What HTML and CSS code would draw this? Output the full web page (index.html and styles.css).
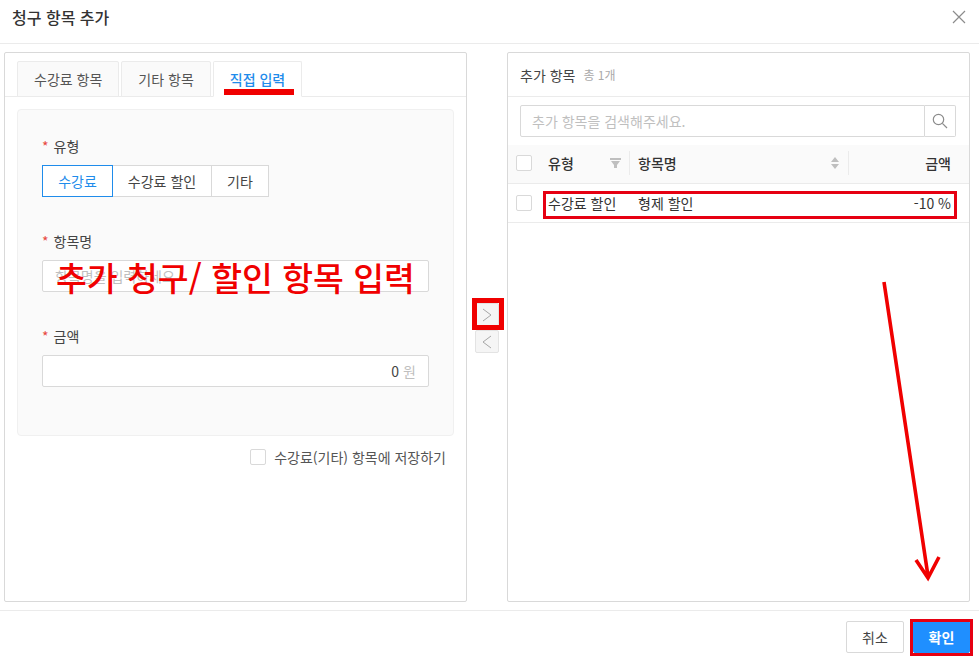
FILE: index.html
```html
<!DOCTYPE html>
<html lang="ko">
<head>
<meta charset="utf-8">
<title>청구 항목 추가</title>
<link rel="stylesheet" href="styles.css">
</head>
<body>
<div class="modal">
  <header class="modal-head">
    <h1 class="modal-title">청구 항목 추가</h1>
    <svg class="close" width="14" height="14" viewBox="0 0 14 14"><path d="M1 1L13 13M13 1L1 13" stroke="#8c8c8c" stroke-width="1.2" fill="none"/></svg>
  </header>
  <main class="modal-body">
    <section class="panel">
      <div class="tabs">
        <div class="tab">수강료 항목</div>
        <div class="tab">기타 항목</div>
        <div class="tab active">직접 입력</div>
      </div>
      <div class="form-box">
        <div class="field field-type">
          <div class="label"><span class="req">*</span>유형</div>
          <div class="radio-group">
            <div class="radio selected">수강료</div>
            <div class="radio r2">수강료 할인</div>
            <div class="radio r3">기타</div>
          </div>
        </div>
        <div class="field">
          <div class="label"><span class="req">*</span>항목명</div>
          <div class="input placeholder">항목명을 입력하세요</div>
        </div>
        <div class="field">
          <div class="label"><span class="req">*</span>금액</div>
          <div class="input amount"><span>0</span><span class="unit">원</span></div>
        </div>
      </div>
      <div class="save-row"><span class="check"></span>수강료(기타) 항목에 저장하기</div>
    </section>
    <div class="transfer">
      <div class="arrow-btn"><svg width="10" height="14" viewBox="0 0 10 14"><path d="M1 1L9 7L1 13" stroke="#a6a6a6" fill="none"/></svg></div>
      <div class="arrow-btn"><svg width="10" height="14" viewBox="0 0 10 14"><path d="M9 1L1 7L9 13" stroke="#a6a6a6" fill="none"/></svg></div>
    </div>
    <section class="panel">
      <div class="panel-head"><span class="panel-title">추가 항목</span><span class="count">총 1개</span></div>
      <div class="search">
        <div class="search-input">추가 항목을 검색해주세요.</div>
        <div class="search-btn"><svg width="16" height="16" viewBox="0 0 16 16"><circle cx="6.5" cy="6.5" r="5.2" stroke="#8c8c8c" stroke-width="1.2" fill="none"/><path d="M10.4 10.4L15 15" stroke="#8c8c8c" stroke-width="1.2"/></svg></div>
      </div>
      <div class="row thead">
        <div class="c-check"><span class="check"></span></div>
        <div class="c-type">유형<svg width="11" height="11" viewBox="0 0 11 11"><path d="M0 0H11V2H0Z M1 3H10L7 7V10H4V7Z" fill="#bfbfbf"/></svg></div>
        <div class="c-name">항목명<svg width="8" height="14" viewBox="0 0 8 14"><path d="M4 1L8 6H0Z M0 8H8L4 13Z" fill="#bfbfbf"/></svg></div>
        <div class="c-amt">금액</div>
      </div>
      <div class="row tbody">
        <div class="c-check"><span class="check"></span></div>
        <div class="c-type">수강료 할인</div>
        <div class="c-name">형제 할인</div>
        <div class="c-amt">-10 %</div>
      </div>
    </section>
  </main>
  <footer class="modal-foot">
    <div class="btn">취소</div>
    <div class="btn primary">확인</div>
  </footer>
</div>
<div class="note">추가 청구/ 할인 항목 입력</div>
<div class="mark mark-tab"></div>
<div class="mark mark-move"></div>
<div class="mark mark-row"></div>
<div class="mark mark-ok"></div>
<svg class="big-arrow" width="979" height="658" viewBox="0 0 979 658"><path d="M884 282L928 576M916 560L928 578L939 557" stroke="#f00000" stroke-width="3.6" fill="none"/></svg>
</body>
</html>
```
FILE: styles.css
```css
* { box-sizing: border-box; }
html, body { margin: 0; height: 100%; }
body {
  background: #fff;
  color: #333;
  font-family: "Noto Sans CJK KR", "Noto Sans", sans-serif;
  font-size: 14px;
  overflow: hidden;
}
.modal { width: 979px; height: 658px; display: flex; flex-direction: column; }
.modal-head {
  height: 44px; flex: none;
  display: flex; align-items: center; justify-content: space-between;
  padding: 0 13px 10px 12px;
  border-bottom: 1px solid #ebebeb;
}
.modal-title { margin: 0; font-size: 16px; font-weight: 500; color: #333; line-height: 20px; }
.modal-body {
  height: 566px; flex: none;
  display: flex;
  padding: 8px 9px 8px 4px;
}
.panel {
  width: 463px; height: 550px; flex: none;
  border: 1px solid #d9d9d9; border-radius: 2px;
}
.tabs {
  height: 44px; padding: 8px 0 0 12px;
  display: flex; gap: 2px;
  border-bottom: 1px solid #ebebeb;
}
.tab {
  height: 36px; padding: 0 16px;
  display: flex; align-items: center;
  background: #fafafa; color: #555;
  border: 1px solid #ebebeb; border-radius: 2px 2px 0 0;
}
.tab.active { background: #fff; color: #1f8ceb; border-bottom-color: #fff; font-weight: 500; }
.form-box {
  margin: 12px 12px 0;
  height: 327px;
  padding: 16px 24px 0;
  background: #fafafa;
  border: 1px solid #f0f0f0; border-radius: 4px;
}
.field { height: 95px; }
.field-type { height: 96px; }
.label { height: 39px; padding-top: 9px; line-height: 20px; color: #444; }
.field-type .label { padding-top: 10px; }
.req { color: #e8483f; margin-right: 5px; }
.radio-group { display: flex; height: 32px; }
.radio {
  display: flex; align-items: center; justify-content: center;
  width: 71px; background: #fff; color: #444;
  border: 1px solid #d9d9d9;
}
.radio.r2 { width: 99px; border-left: 0; }
.radio.r3 { width: 57px; border-left: 0; }
.radio.selected { color: #1f8ceb; border-color: #1f8ceb; }
.input {
  width: 387px; height: 32px; margin-top: -1px;
  display: flex; align-items: center;
  padding: 0 12px;
  background: #fff; border: 1px solid #d9d9d9; border-radius: 2px;
}
.placeholder { color: #bfbfbf; }
.amount { justify-content: flex-end; gap: 4px; color: #444; }
.unit { color: #bfbfbf; }
.save-row {
  margin-top: 13px; padding-right: 20px;
  display: flex; justify-content: flex-end; align-items: center;
  gap: 8px; height: 16px; color: #555;
}
.check {
  display: block; width: 16px; height: 16px; flex: none;
  background: #fff; border: 1px solid #d9d9d9; border-radius: 2px;
}
.transfer {
  width: 40px; flex: none;
  padding-top: 251px; padding-left: 8px;
  display: flex; flex-direction: column; gap: 4px;
}
.arrow-btn {
  width: 24px; height: 23px;
  display: flex; align-items: center; justify-content: center;
  background: #f5f5f5; border: 1px solid #e3e3e3; border-radius: 2px;
}
.panel-head {
  height: 44px; padding: 0 12px;
  display: flex; align-items: center; gap: 8px;
  border-bottom: 1px solid #ebebeb;
}
.panel-title { color: #444; font-size: 14px; }
.count { color: #aaa; font-size: 12px; }
.search { display: flex; margin: 8px 13px 8px 12px; height: 32px; }
.search-input {
  flex: 1; padding: 0 11px;
  display: flex; align-items: center;
  color: #bfbfbf;
  border: 1px solid #d9d9d9; border-radius: 2px 0 0 2px;
}
.search-btn {
  width: 31px;
  display: flex; align-items: center; justify-content: center;
  border: 1px solid #d9d9d9; border-left: 0; border-radius: 0 2px 2px 0;
}
.row { display: flex; align-items: center; }
.thead { height: 39px; padding-bottom: 2px; background: #fafafa; font-weight: 500; border-bottom: 1px solid #ebebeb; }
.tbody { height: 39px; border-bottom: 1px solid #ebebeb; }
.c-check { width: 40px; padding-left: 8px; flex: none; }
.c-type { width: 82px; flex: none; display: flex; justify-content: space-between; align-items: center; padding-right: 8px; }
.c-name { width: 219px; flex: none; display: flex; justify-content: space-between; align-items: center; padding: 0 9px 0 8px; }
.c-amt { flex: 1; text-align: right; padding-right: 18px; }
.thead .c-type, .thead .c-name { height: 24px; border-right: 1px solid #ebebeb; }
.modal-foot {
  flex: 1;
  display: flex; justify-content: flex-end; gap: 9px;
  padding: 10px 9px 0 0;
  border-top: 1px solid #ebebeb;
}
.btn {
  width: 58px; height: 32px;
  display: flex; align-items: center; justify-content: center;
  background: #fff; color: #444;
  border: 1px solid #d9d9d9; border-radius: 2px;
}
.btn.primary { width: 57px; background: #1f8fff; border-color: #1f8fff; color: #fff; font-weight: 700; }
.note {
  position: absolute; left: 56px; top: 253px;
  font-size: 33.5px; line-height: 48px; color: #f00000; white-space: nowrap;
  font-weight: 500;
}
.mark { position: absolute; }
.mark-tab { left: 224px; top: 89px; width: 70px; height: 6px; background: #f00000; }
.mark-move { left: 472px; top: 298px; width: 32px; height: 32px; border: 5px solid #f00000; }
.mark-row { left: 543px; top: 191px; width: 414px; height: 28px; border: 3px solid #e60012; }
.mark-ok { left: 910px; top: 619px; width: 63px; height: 37px; border: 3px solid #e60012; }
.big-arrow { position: absolute; left: 0; top: 0; pointer-events: none; }
```
